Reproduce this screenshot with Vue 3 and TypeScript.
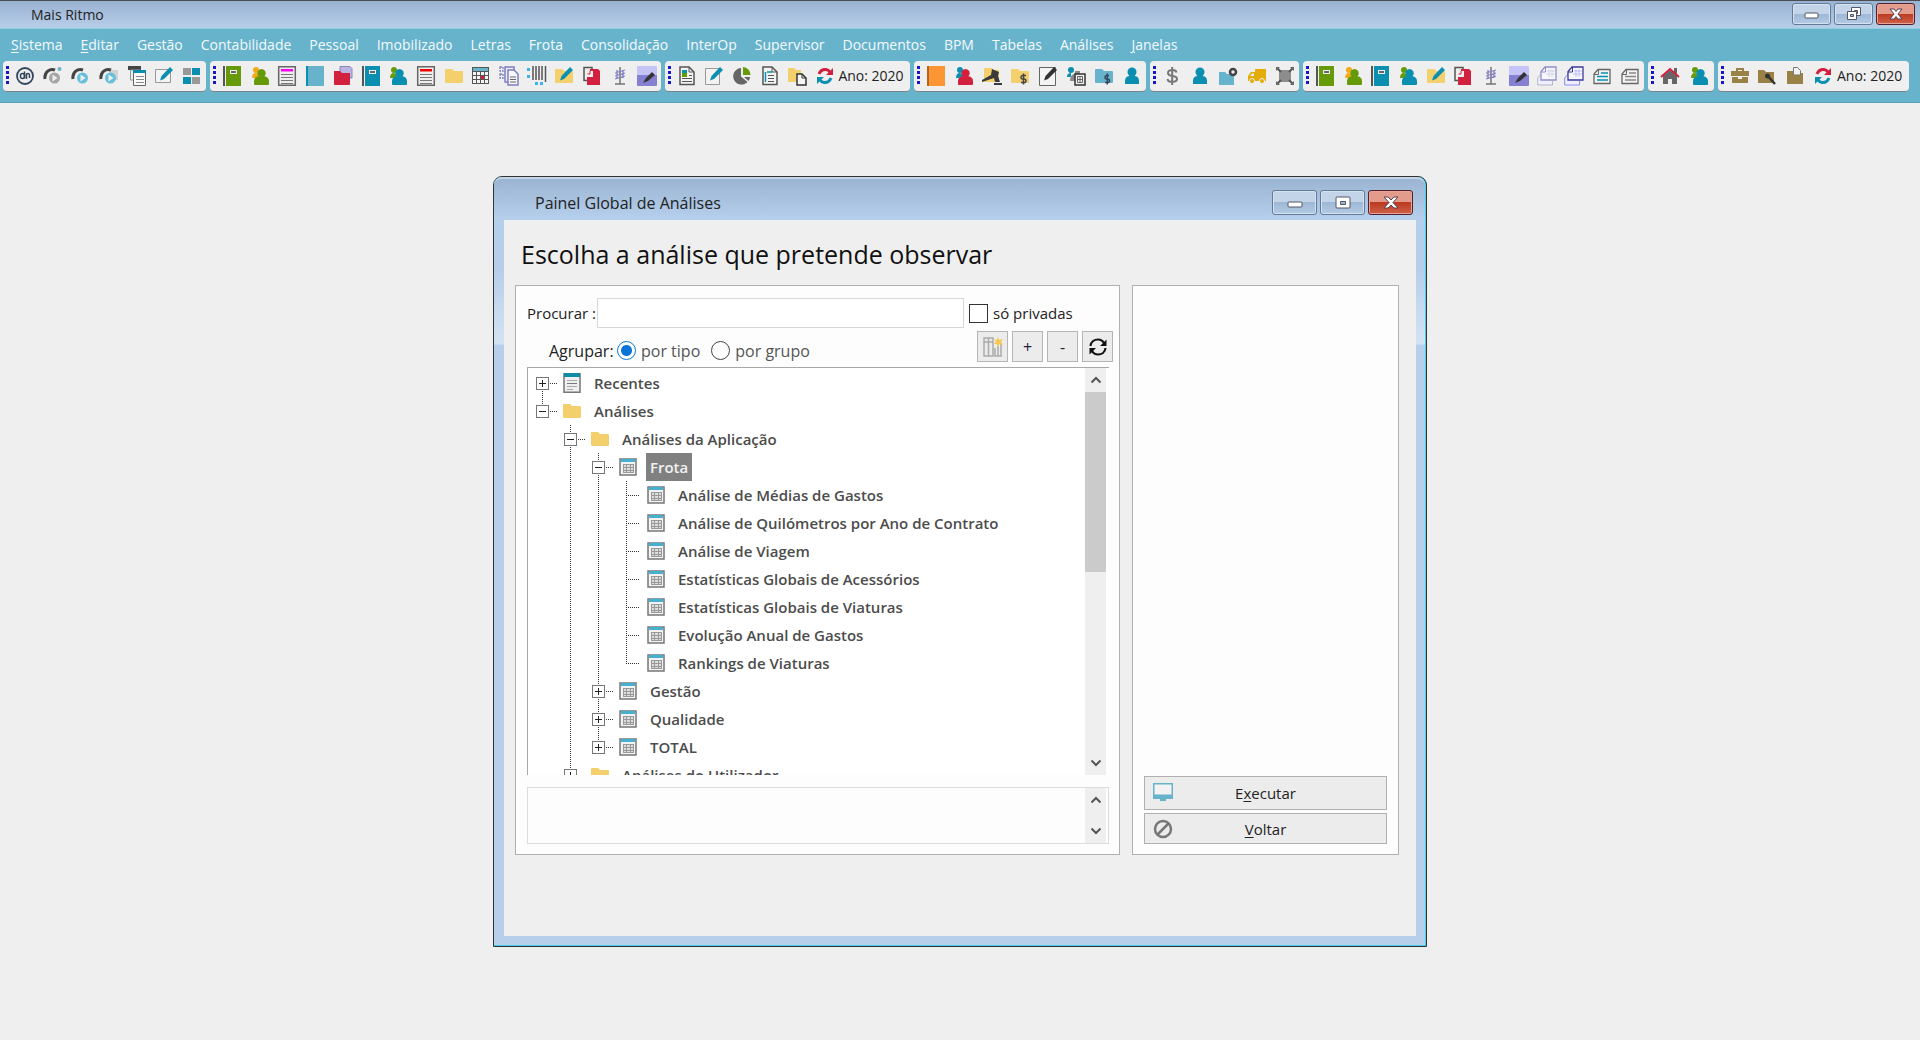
<script setup lang="ts">
import { ref } from 'vue'

interface ToolGroup { icons: string[]; year?: boolean }
interface TreeRow {
  label: string
  icon: 'report' | 'folder' | 'table'
  guides: string[]
  box?: '+' | '-'
  selected?: boolean
}

const teal = '#0a8fb0'
const sky = '#67b3cc'
const green = '#669a08'
const red = '#d2213f'
const sand = '#f3d06c'
const tan = '#9a8246'
const grey = '#666'
const violet = '#7f7fc4'

const book = (fill: string, spine = '#555') =>
  `<path fill="${spine}" d="M1 0h2v20H1z"/><path fill="${fill}" d="M4 0h15v20H4z"/><path fill="#eee" d="M8 4h7v4H8z"/><path fill="#666" d="M9 5h5v2H9z"/>`
const plainBook = (fill: string, spine: string) =>
  `<path fill="${fill}" d="M1 0h18v20H1z"/><path fill="${spine}" d="M1 0h2v20H1z"/>`
const body = (fill: string) =>
  `<path fill="${fill}" d="M11.500 3a4.200 4.200 0 0 1 3 7.200q4.500.8 4.500 5v3q0 .8-1 .8H5q-1 0-1-.8v-3q0-4.200 4.500-5A4.200 4.200 0 0 1 11.500 3z"/>`
const people = (back: string, front: string) =>
  `<circle cx="6" cy="4" r="3" fill="${back}"/><path fill="${back}" d="M2 12q0-5 4-5l4 2-3 3z"/>${body(front)}`
const folder = (fill: string) => `<path fill="${fill}" d="M2 3h6l2 2h8q1 0 1 1v10q0 1-1 1H2q-1 0-1-1V4q0-1 1-1z"/>`
const sheet = (head: string) =>
  `<path fill="#eee" stroke="#666" stroke-width="1.500" d="M1.700.7h16.600v18.600H1.700z"/><path fill="${head}" d="M4 3h12v2.500H4z"/><path stroke="#777" d="M4 8.500h12M4 11.500h12M4 14.500h12M4 17.500h12"/>`
const pencil = (fill: string) => `<path fill="${fill}" d="M16 1l3 3-9 9-4 1.500L7.500 10z"/>`
const page = (inner: string) =>
  `<path fill="#f4f4f4" stroke="#555" stroke-width="1.500" d="M3 1h9l5 5v12.500H3z"/><path fill="none" stroke="#555" d="M12 1v5h5"/>${inner}`
const phone = (ball: string, extra: string) =>
  `${extra}<path fill="none" stroke="#444" stroke-width="3" d="M2 13C1 6 7 2 12 4"/><circle cx="11.500" cy="12" r="5.500" fill="${ball}"/><path fill="#eee" d="M9.500 8.500l5 3.500-5 3.500z"/>`
const copies = (front: string, back: string) =>
  `<path fill="#eef" stroke="${back}" d="M4.500 7.500L.7 12v7h14.800v-4"/><path fill="#f6f6ff" stroke="${front}" stroke-width="1.300" d="M8 1h11v13H4V5.500z"/><path fill="none" stroke="${front}" d="M8.500 1v5H4"/><path stroke="${back}" stroke-width=".5" d="M12 3v8M15 3v8M9 8h9M10 5h8"/>`
const memo = (line: string) =>
  `<path fill="#f3f3f3" stroke="#666" stroke-width="1.300" d="M6 3.500h12v14H2V8z"/><path fill="none" stroke="#666" d="M6.500 3.500v5H2"/><path stroke="${line}" stroke-width="1.500" d="M9 7h7M5 10.500h11M5 14h11"/>`
const redFile = `<path fill="#eee" stroke="#555" stroke-width="1.500" d="M2 1.500h8v13H2z"/><path fill="${red}" d="M8 3h8l2 2v14H5V9h3z"/><path fill="#eee" d="M7 5h4v6H5V7z"/><path fill="none" stroke="${red}" d="M8 5v3H5.500"/>`
const antenna = `<path stroke="#777" stroke-width="1.500" d="M10 1v17M5 18h10"/><path fill="none" stroke="${violet}" stroke-width="1.300" d="M5 7l10-3M5 10l10-3M5 13l10-3M7 4v8M13 5v7"/>`
const noteBox = `<path fill="#c6c3f6" d="M1 0h18q1 0 1 1v8H0V1q0-1 1-1z"/><path fill="#8580d2" d="M0 9h20v10q0 1-1 1H1q-1 0-1-1z"/><path fill="#333" d="M15 6l3 3-7 6-5 2 3-5z"/>`
const refresh = `<path fill="none" stroke="${red}" stroke-width="3" d="M4 8q2-5 7-4.500 2.500.3 4 2.500"/><path fill="${red}" d="M18 2v7h-7z"/><path fill="none" stroke="${teal}" stroke-width="3" d="M16 12q-2 5-7 4.500-2.500-.3-4-2.500"/><path fill="${teal}" d="M2 18v-7h7z"/>`

const glyphs: Record<string, string> = {
  brand: `<circle cx="10" cy="10" r="8" fill="none" stroke="#34465c" stroke-width="1.800"/><rect x="5.500" y="7.500" width="4" height="5" rx="2" fill="none" stroke="#34465c" stroke-width="1.500"/><path fill="none" stroke="#34465c" stroke-width="1.500" d="M9.500 5.500v7M11.500 13V8q3-1.500 3 1.500V12"/>`,
  phoneGrey: phone('#a5a5a5', `<circle cx="16.500" cy="3" r="2" fill="${sky}"/>`),
  phoneBlue: phone('#68bfdc', ''),
  phoneCard: phone('#68bfdc', '<path fill="#d2d2d2" d="M10 4h9v10h-9z"/>'),
  windows: `<path fill="#444" d="M1 0h13v4H1z"/><path fill="#eee" stroke="#999" d="M3.500 4h10v10h-10z"/><path fill="#fafafa" stroke="#666" d="M6.500 4.500h12v15h-12z"/><path fill="${teal}" d="M6 4h13v3H6z"/><path stroke="#888" d="M9 10.500h8M9 13.500h8M9 16.500h8"/>`,
  edit: `<path fill="#f3f3f3" stroke="#999" d="M1.500 3.500h15v13h-15z"/>${pencil(teal)}`,
  tiles: `<path fill="#999" d="M1 2h8v7H1zM10 11h8v7h-8z"/><path fill="${teal}" d="M10 2h8v7h-8zM1 11h8v7H1z"/>`,
  bookGreen: book(green),
  bookTeal: book(teal),
  bookSky: plainBook(sky, teal),
  bookOrange: plainBook('#fb9632', '#b5651d'),
  peopleGreen: people('#f3a91c', green),
  peopleTeal: people(green, teal),
  peopleRed: people(teal, red),
  person: `<circle cx="10" cy="6" r="4.500" fill="${teal}"/><path fill="${teal}" d="M3 18v-3q0-5 5-5h4q5 0 5 5v3z"/>`,
  sheetPink: sheet('#ff00f0'),
  sheetRed: sheet('#f00000'),
  redFolder: `<path fill="#b9b4e2" stroke="#8d88b8" d="M7 .5h10l2 2V12H7z"/><path fill="${red}" d="M1 5h6l2 2h8v11q0 1-1 1H2q-1 0-1-1z"/>`,
  folder: folder(sand),
  calendar: `<path fill="#555" d="M1 1h17v17H1z"/><path fill="${sky}" d="M2 2h15v3H2z"/><path fill="#f4f4f4" d="M2 6h3v3H2zM6 6h3v3H6zM10 6h3v3h-3zM14 6h3v3h-3zM2 10h3v3H2zM6 10h3v3H6zM14 10h3v3h-3zM2 14h3v3H2zM6 14h3v3H6zM10 14h3v3h-3zM14 14h3v3h-3z"/><path fill="${red}" d="M10 10h3v3h-3z"/>`,
  pagesViolet: `<path fill="none" stroke="${violet}" stroke-width="1.300" stroke-dasharray="2 1" d="M1 1h3v4H1zM1 8h3v4H1z"/><path fill="#eee" stroke="${violet}" stroke-width="1.500" d="M6 1h9v15H6z"/><path fill="#f6f6ff" stroke="${violet}" stroke-width="1.500" d="M9 4h6l4 4v11H9z"/><path stroke="${grey}" d="M11 11h6M11 13.500h6M11 16h6"/>`,
  barcode: `<path stroke="#555" stroke-width="1.500" d="M6 0v14M9 0v14M12 0v14M15 0v14M18.500 0v16"/><path fill="#3fb2ee" d="M0 2h3v3H0zM0 9h3v3H0zM8 16h3v3H8zM13 16h3v3h-3z"/>`,
  folderEdit: `${folder(sand)}${pencil(teal)}`,
  redFile,
  antenna,
  noteBox,
  pageImage: page(`<path fill="${green}" d="M5 5h5v6H5z"/><path fill="${teal}" d="M5 4h5v3H5z"/><path stroke="#555" d="M12 9.500h3M5 12.500h10M5 15.500h10"/>`),
  editTall: `<path fill="#f3f3f3" stroke="#999" d="M1.500 2.500h14v16h-14z"/>${pencil(teal)}`,
  pie: `<path fill="${grey}" d="M9 2v8.500l6.500 5.500A8.300 8.300 0 1 1 9 2z"/><path fill="${green}" d="M11 1a8 8 0 0 1 7.500 8H11z"/><path fill="${grey}" d="M12 11h6q0 2-1.500 4z"/>`,
  pageText: page(`<path stroke="${teal}" stroke-width="1.500" d="M5.500 6v10M7 6h5"/><path stroke="#555" d="M8 9.500h6M8 12.500h6M8 15.500h6"/>`),
  folderDoc: `<path fill="${sand}" d="M1 2h6l2 2h5v12H1z"/><path fill="#f6f6f6" stroke="#333" stroke-width="1.500" d="M10 8h5l4 4v7h-9z"/><path fill="none" stroke="#333" d="M15 8v4h4"/>`,
  refresh,
  gavel: `<path fill="${sand}" d="M2 3q0-1 1-1h7l1 2h6v12H2z"/><path fill="#3a3a3a" d="M10 3l7 3-1 4 2 6h-5l-1-4-3 1-9 3v-2l9-5zM12 17h8v2h-8z"/>`,
  folderMoney: `${folder(sand)}<path fill="none" stroke="#444" stroke-width="1.500" d="M16 9.500h-3.500q-1.500 0-1.500 1.800t1.500 1.700h2q1.500 0 1.500 1.800t-1.500 1.700H11M13.500 7.500v11"/>`,
  note: `<path fill="#f4f4f4" stroke="#666" d="M1.500 1.500h16v18h-16z"/>${pencil('#333')}`,
  peopleCalc: `<circle cx="5" cy="4" r="3" fill="${teal}"/><path fill="${teal}" d="M1 11q0-4 4-4v4z"/><path fill="#888" d="M4 16q0-8 5-8V5h5v10H4z"/><path fill="#f0f0f0" stroke="#333" stroke-width="1.500" d="M9 8h10v11H9z"/><path fill="none" stroke="${grey}" d="M11.500 10.500h5v6h-5zM11 13.500h6M14 10v7"/>`,
  folderSky: `${folder(sky)}<path fill="none" stroke="#34465c" stroke-width="1.500" d="M15 9.500h-2.500q-1.500 0-1.500 1.800t1.500 1.700h1.500q1.500 0 1.500 1.800t-1.500 1.700H11M13.300 7.500v11"/>`,
  dollar: `<path fill="none" stroke="#777" stroke-width="2" d="M14.500 6.500Q14 4 10.500 4 6 4 6 6.800T10.500 10t4.500 3-4.500 3Q6 16 5.500 13M10.200 1v18"/>`,
  folderPin: `<path fill="${sky}" d="M1 6h6l2 2h7v11H1z"/><circle cx="15" cy="6" r="3" fill="#eee" stroke="#444" stroke-width="2.500"/>`,
  truck: `<path fill="#e3ac08" d="M8 3h11v12H1v-5l3-4h4z"/><path fill="#eee" d="M3 10l2-2.500h2V10z"/><circle cx="5" cy="15" r="2.500" fill="#e3ac08" stroke="#eee"/><circle cx="15" cy="15" r="2.500" fill="#e3ac08" stroke="#eee"/>`,
  expand: `<path fill="#8d8d8d" d="M4 4h12v12H4z"/><path stroke="#555" stroke-width="2" d="M2 2l4 4M18 2l-4 4M2 18l4-4M18 18l-4-4"/><path fill="#666" d="M1 1h4L1 5zM19 1v4l-4-4zM1 19v-4l4 4zM19 19h-4l4-4z"/>`,
  copiesLight: copies('#8f8fc8', '#b5b5cc'),
  copiesDark: copies('#3b3b9b', '#8c8cf0'),
  memoTeal: memo(teal),
  memoGrey: memo('#888'),
  home: `<path fill="#666" d="M3 10l7-6 7 6v8h-5v-5H8v5H3z"/><path fill="#666" d="M14 2h3v6h-3z"/><path fill="none" stroke="${red}" stroke-width="2" d="M1 11l9-8 9 8"/>`,
  briefcase: `<path fill="none" stroke="${tan}" stroke-width="2" d="M7 6V3h6v3"/><path fill="${tan}" d="M1 5h18v5H1zM2 11h6v2h4v-2h6v6H2z"/>`,
  folderTool: `<path fill="${tan}" d="M1 4h6l2 2h8v11H1z"/><path stroke="#333" stroke-width="2.500" d="M10 9l8 9"/><circle cx="10.500" cy="10" r="2.500" fill="#333"/>`,
  folderSheet: `<path fill="${tan}" d="M2 5h6l2 2h8v11H2z"/><path fill="#f2f2f2" stroke="#777" d="M8.500 1.500h4l3 3V9h-7z"/>`,
}

const treeGlyphs: Record<TreeRow['icon'], string> = {
  report: '<path fill="#efefef" stroke="#777" stroke-width="1.500" d="M2 .8h16v18.500H2z"/><path fill="#0e8ba5" d="M2 0h16v4H2z"/><path stroke="#aaa" d="M5 7.500h10M5 13.500h10M5 16.500h6"/><path stroke="#777" d="M5 10.500h10"/>',
  folder: folder(sand),
  table: '<path fill="#f3f3f3" stroke="#777" stroke-width="1.500" d="M2 2h16v16H2z"/><path fill="#48b0cf" d="M3 2h14v3H3z"/><path fill="#999" d="M5 7h11v9H5z"/><path fill="#ddd" d="M6 8h2v2H6zM9 8h3v2H9zM13 8h2v2h-2zM6 11h2v2H6zM9 11h3v2H9zM13 11h2v2h-2zM6 14h2v1H6zM9 14h3v1H9zM13 14h2v1h-2z"/>',
}

const menus: { text: string; key?: boolean }[] = [
  { text: 'Sistema', key: true }, { text: 'Editar', key: true }, { text: 'Gestão' }, { text: 'Contabilidade' },
  { text: 'Pessoal' }, { text: 'Imobilizado' }, { text: 'Letras' }, { text: 'Frota' }, { text: 'Consolidação' },
  { text: 'InterOp' }, { text: 'Supervisor' }, { text: 'Documentos' }, { text: 'BPM' }, { text: 'Tabelas' },
  { text: 'Análises' }, { text: 'Janelas', key: true },
]

const groups: ToolGroup[] = [
  { icons: ['brand', 'phoneGrey', 'phoneBlue', 'phoneCard', 'windows', 'edit', 'tiles'] },
  { icons: ['bookGreen', 'peopleGreen', 'sheetPink', 'bookSky', 'redFolder', 'bookTeal', 'peopleTeal', 'sheetRed', 'folder', 'calendar', 'pagesViolet', 'barcode', 'folderEdit', 'redFile', 'antenna', 'noteBox'] },
  { icons: ['pageImage', 'editTall', 'pie', 'pageText', 'folderDoc', 'refresh'], year: true },
  { icons: ['bookOrange', 'peopleRed', 'gavel', 'folderMoney', 'note', 'peopleCalc', 'folderSky', 'person'] },
  { icons: ['dollar', 'person', 'folderPin', 'truck', 'expand'] },
  { icons: ['bookGreen', 'peopleGreen', 'bookTeal', 'peopleTeal', 'folderEdit', 'redFile', 'antenna', 'noteBox', 'copiesLight', 'copiesDark', 'memoTeal', 'memoGrey'] },
  { icons: ['home', 'peopleTeal'] },
  { icons: ['briefcase', 'folderTool', 'folderSheet', 'refresh'], year: true },
]

const leaf = (label: string, last = false): TreeRow => ({
  label, icon: 'table', guides: ['', 'full', 'full', last ? 'up leaf' : 'full leaf'],
})

const rows: TreeRow[] = [
  { label: 'Recentes', icon: 'report', guides: ['down'], box: '+' },
  { label: 'Análises', icon: 'folder', guides: ['up'], box: '-' },
  { label: 'Análises da Aplicação', icon: 'folder', guides: ['', 'full'], box: '-' },
  { label: 'Frota', icon: 'table', guides: ['', 'full', 'full'], box: '-', selected: true },
  leaf('Análise de Médias de Gastos'),
  leaf('Análise de Quilómetros por Ano de Contrato'),
  leaf('Análise de Viagem'),
  leaf('Estatísticas Globais de Acessórios'),
  leaf('Estatísticas Globais de Viaturas'),
  leaf('Evolução Anual de Gastos'),
  leaf('Rankings de Viaturas', true),
  { label: 'Gestão', icon: 'table', guides: ['', 'full', 'full'], box: '+' },
  { label: 'Qualidade', icon: 'table', guides: ['', 'full', 'full'], box: '+' },
  { label: 'TOTAL', icon: 'table', guides: ['', 'full', 'up'], box: '+' },
  { label: 'Análises do Utilizador', icon: 'folder', guides: ['', 'full'], box: '+' },
]

const search = ref('')
const onlyPrivate = ref(false)
const grouping = ref<'tipo' | 'grupo'>('tipo')
const notes = ref('')
</script>

<template>
  <div class="app">
    <header class="shell">
      <div class="titlebar">
        <span>Mais Ritmo</span>
        <div class="controls">
          <button type="button" aria-label="Minimizar"><svg viewBox="0 0 16 16"><rect x="1" y="7" width="13" height="5" rx="1" fill="#fff" stroke="#556" /></svg></button>
          <button type="button" aria-label="Restaurar"><svg viewBox="0 0 16 16"><path fill="#fff" stroke="#556" d="M5.500 1.500h9v8h-9z" /><path fill="#9db8d6" stroke="#556" d="M8.500 4.500h3v3h-3z" /><path fill="#fff" stroke="#556" d="M1.500 5.500h9v8h-9z" /><path fill="#9db8d6" stroke="#556" d="M4.500 8.500h3v2h-3z" /></svg></button>
          <button type="button" class="close" aria-label="Fechar"><svg viewBox="0 0 16 16"><path fill="#fff" stroke="#545" d="M2 3h4l2 2.500L10 3h4l-4 5 4 5h-4l-2-2.500L6 13H2l4-5z" /></svg></button>
        </div>
      </div>
      <nav class="menu">
        <a v-for="m in menus" :key="m.text" href="#"><template v-if="m.key"><u>{{ m.text[0] }}</u>{{ m.text.slice(1) }}</template><template v-else>{{ m.text }}</template></a>
      </nav>
      <div class="toolbar">
        <div v-for="(g, i) in groups" :key="i" class="tools">
          <i class="grip"></i>
          <button v-for="(name, j) in g.icons" :key="j" type="button" :aria-label="name">
            <svg viewBox="0 0 20 20" v-html="glyphs[name]"></svg>
          </button>
          <span v-if="g.year" class="year">Ano: 2020</span>
        </div>
      </div>
    </header>

    <main class="desk">
      <section class="dialog">
        <div class="frame">
          <div class="caption">
            <span>Painel Global de Análises</span>
            <div class="controls">
              <button type="button" aria-label="Minimizar"><svg viewBox="0 0 16 16"><rect x="1" y="7" width="14" height="5" rx="1" fill="#fff" stroke="#556" /></svg></button>
              <button type="button" aria-label="Maximizar"><svg viewBox="0 0 16 16"><rect x="1" y="2" width="14" height="11" rx="1" fill="#fff" stroke="#556" /><path fill="#9db8d6" stroke="#556" d="M5.500 6.500h5v3h-5z" /></svg></button>
              <button type="button" class="close" aria-label="Fechar"><svg viewBox="0 0 16 16"><path fill="#fff" stroke="#545" d="M1 2h4l3 3 3-3h4l-5 5.500 5 5.500h-4l-3-3-3 3H1l5-5.500z" /></svg></button>
            </div>
          </div>
          <div class="content">
            <h1>Escolha a análise que pretende observar</h1>
            <div class="panels">
              <div class="panel left">
                <div class="find">
                  <label for="find">Procurar :</label>
                  <input id="find" v-model="search" type="text" />
                  <input id="private" v-model="onlyPrivate" type="checkbox" />
                  <label for="private">só privadas</label>
                </div>
                <div class="group">
                  <span class="group-title">Agrupar:</span>
                  <input id="tipo" v-model="grouping" type="radio" value="tipo" /><label for="tipo">por tipo</label>
                  <input id="grupo" v-model="grouping" type="radio" value="grupo" /><label for="grupo">por grupo</label>
                  <div class="actions">
                    <button type="button" aria-label="Nova análise"><svg viewBox="0 0 20 20"><path fill="none" stroke="#aaa" stroke-width="1.500" d="M1 1h9v18H1zM5.500 1v18M1 5h9M12 11v8h6V7M15 9v10" /><path fill="#f6c84f" d="M15 0l1.500 3L20 2l-2 3 2 3-3.500-1L15 10l-1.500-3L11 7l2-2.500L11 2l3 1z" /></svg></button>
                    <button type="button">+</button>
                    <button type="button">-</button>
                    <button type="button" aria-label="Atualizar"><svg viewBox="0 0 20 20"><path fill="none" stroke="#111" stroke-width="2.200" d="M2.500 9C3 4.500 6.500 2.500 10 2.500q4 0 6 3.500M17.500 11c-.5 4.500-4 6.500-7.500 6.500q-4 0-6-3.500" /><path fill="#111" d="M18.500 2.500V9h-6.500zM1.500 17.500V11H8z" /></svg></button>
                  </div>
                </div>
                <div class="tree">
                  <ul>
                    <li v-for="row in rows" :key="row.label">
                      <span v-for="(g, k) in row.guides" :key="k" class="guide" :class="g">
                        <span v-if="row.box && k === row.guides.length - 1" class="box" :class="{ plus: row.box === '+' }"></span>
                      </span>
                      <svg class="node" viewBox="0 0 20 20" v-html="treeGlyphs[row.icon]"></svg>
                      <span class="label" :class="{ selected: row.selected }">{{ row.label }}</span>
                    </li>
                  </ul>
                  <div class="scroll">
                    <button type="button" aria-label="Subir"><svg viewBox="0 0 12 12"><path d="M1.500 8.500L6 4l4.500 4.500" /></svg></button>
                    <div class="track"><div class="thumb"></div></div>
                    <button type="button" aria-label="Descer"><svg viewBox="0 0 12 12"><path d="M1.500 3.500L6 8l4.500-4.500" /></svg></button>
                  </div>
                </div>
                <div class="notes">
                  <textarea v-model="notes" aria-label="Descrição"></textarea>
                  <div class="scroll">
                    <button type="button" aria-label="Subir"><svg viewBox="0 0 12 12"><path d="M1.500 8.500L6 4l4.500 4.500" /></svg></button>
                    <div class="track"></div>
                    <button type="button" aria-label="Descer"><svg viewBox="0 0 12 12"><path d="M1.500 3.500L6 8l4.500-4.500" /></svg></button>
                  </div>
                </div>
              </div>
              <div class="panel right">
                <button type="button" class="run">
                  <svg viewBox="0 0 22 20"><path fill="#67b3cc" d="M1 0h20v16H1z" /><path fill="#f2f2f2" d="M2.500 1.500h17v10h-17z" /><path fill="#67b3cc" d="M8 16h6v2H8z" /></svg>
                  <span>E<u>x</u>ecutar</span>
                </button>
                <button type="button" class="back">
                  <svg viewBox="0 0 22 20"><circle cx="11" cy="10" r="8" fill="none" stroke="#777" stroke-width="2.500" /><path stroke="#777" stroke-width="2.500" d="M5.500 15.500l11-11" /></svg>
                  <span><u>V</u>oltar</span>
                </button>
              </div>
            </div>
          </div>
        </div>
      </section>
    </main>
  </div>
</template>

<style>
body {
  background: #efefef;
}
</style>

<style scoped>
* {
  box-sizing: border-box;
}
.app {
  min-height: 100vh;
  background: #efefef;
  font-family: "Open Sans", "Noto Sans", sans-serif;
  font-size: 14px;
  line-height: 20px;
  color: #222;
}
button {
  padding: 0;
  border: 0;
  background: none;
  font: inherit;
  color: inherit;
}
svg {
  display: block;
}
u {
  text-underline-offset: 2px;
}
.shell {
  background: #67b3cc;
  border-top: 1px solid #4d4d4d;
  border-bottom: 1px solid #559fb8;
}
.titlebar {
  display: flex;
  justify-content: space-between;
  height: 28px;
  padding: 2px 5px 0 31px;
  background: linear-gradient(#98b2d3, #b8cee8);
  border-bottom: 1px solid #8fd0e0;
}
.titlebar span {
  line-height: 24px;
}
.controls {
  display: flex;
  gap: 3px;
}
.controls button {
  display: flex;
  align-items: center;
  justify-content: center;
  width: 39px;
  height: 22px;
  border: 1px solid #637a99;
  border-radius: 3px;
  box-shadow: inset 0 0 0 1px #d5e2f1;
  background: linear-gradient(#c3d4e8 50%, #9db8d6 50%, #b4cbe4);
}
.controls button.close {
  border-color: #55202a;
  box-shadow: inset 0 0 0 1px #e4a598;
  background: linear-gradient(#e39b8b 50%, #bc3a22 50%, #cf6148);
}
.controls svg {
  width: 16px;
  height: 16px;
}
.menu {
  display: flex;
  gap: 18px;
  padding: 6px 11px 0;
}
.menu a {
  color: #f4fafc;
  text-decoration: none;
}
.toolbar {
  display: grid;
  grid-template-columns: 203fr 450fr 245fr 231fr 149fr 340fr 66fr 191fr;
  gap: 4px;
  padding: 6px 11px 10px 3px;
}
.tools {
  display: flex;
  align-items: center;
  min-width: 0;
  height: 31px;
  border-bottom: 1px solid #77858a;
  border-radius: 4px;
  background: #efefef;
}
.tools button {
  display: flex;
  flex: 1;
  justify-content: center;
  min-width: 0;
}
.tools svg {
  flex: none;
  width: 20px;
  height: 20px;
}
.grip {
  flex: none;
  width: 3px;
  height: 20px;
  margin: 0 2px 0 3px;
  background: linear-gradient(#1818c8 3px, transparent 3px) 0 0 / 3px 5px;
}
.year {
  flex: none;
  width: 72px;
  white-space: nowrap;
}
.desk {
  padding: 73px 16px 40px;
}
.dialog {
  max-width: 934px;
  margin: 0 auto;
  border: 1px solid #333;
  border-radius: 9px 9px 0 0;
  background: #3fd0f0;
  font-size: 15px;
}
.frame {
  margin: 0 1px 1px 0;
  padding: 0 9px 9px 10px;
  border-top: 2px solid #c3d4e6;
  border-radius: 8px 8px 0 0;
  background: linear-gradient(#9ab4d2, #b5cfec 40px, #b7cee9 90px, #d4e3f3 165px, #b7cfeb 166px);
}
.caption {
  display: flex;
  justify-content: space-between;
  height: 41px;
  padding: 11px 3px 0 31px;
}
.caption span {
  font-size: 16px;
  line-height: 26px;
}
.caption .controls button {
  width: 45px;
  height: 25px;
}
.content {
  padding: 16px 17px 81px 11px;
  background: #efefef;
}
h1 {
  margin: 0 0 13px 6px;
  font-size: 25px;
  font-weight: 400;
  line-height: 36px;
  color: #111;
}
.panels {
  display: flex;
  gap: 12px;
}
.panel {
  border: 1px solid #b0b0b0;
  background: #fdfdfd;
}
.left {
  flex: 1;
  min-width: 0;
  padding: 12px 10px 10px 11px;
}
.find {
  display: flex;
  align-items: center;
  height: 30px;
  font-weight: 500;
}
.find label:first-child {
  flex: none;
  width: 70px;
}
.find input[type="text"] {
  flex: 1;
  min-width: 0;
  height: 30px;
  border: 1px solid #d8d8d8;
  background: #fff;
}
input[type="checkbox"] {
  appearance: none;
  width: 19px;
  height: 19px;
  margin: 0 5px;
  border: 1px solid #333;
  background: #fff;
}
.find label:last-child {
  width: 116px;
}
.group {
  display: flex;
  align-items: center;
  height: 39px;
  padding: 6px 0 0 22px;
  font-size: 16px;
}
.group-title {
  width: 68px;
}
.group label {
  margin: 0 11px 0 5px;
  color: #555;
}
input[type="radio"] {
  appearance: none;
  width: 19px;
  height: 19px;
  margin: 0;
  border: 1px solid #444;
  border-radius: 50%;
  background: #fff;
}
input[type="radio"]:checked {
  border-color: #0b79d4;
  background: radial-gradient(circle, #0b74d6 5px, #fff 6px);
}
.actions {
  display: flex;
  gap: 4px;
  margin: 0 -4px 8px auto;
}
.actions button {
  display: flex;
  align-items: center;
  justify-content: center;
  width: 31px;
  height: 31px;
  border: 1px solid #b5b5b5;
  background: #ececec;
  color: #223;
}
.actions svg {
  width: 20px;
  height: 20px;
}
.tree {
  display: flex;
  height: 408px;
  overflow: hidden;
  border: 1px solid #a8a8a8;
  border-width: 1px 0 0 1px;
  background: #fff;
}
ul {
  flex: 1;
  margin: 0;
  padding: 1px 0 0;
  list-style: none;
}
li {
  display: flex;
  align-items: center;
  height: 28px;
  font-weight: 600;
  color: #4c4c4c;
}
.guide {
  display: flex;
  flex: none;
  align-items: center;
  justify-content: center;
  width: 28px;
  height: 28px;
  background-repeat: no-repeat;
}
.full {
  background-image: repeating-linear-gradient(#333 0 1px, transparent 1px 2px);
  background-size: 1px 28px;
  background-position: 14px 0;
}
.up,
.down {
  background-image: repeating-linear-gradient(#333 0 1px, transparent 1px 2px);
  background-size: 1px 14px;
  background-position: 14px 0;
}
.down {
  background-position: 14px 14px;
}
.leaf::after {
  content: "";
  width: 14px;
  height: 1px;
  margin-left: 14px;
  background: repeating-linear-gradient(90deg, #333 0 1px, transparent 1px 2px);
}
.box {
  position: relative;
  width: 13px;
  height: 13px;
  border: 1px solid #777;
  background: linear-gradient(#222, #222) 50% 50% / 7px 1px no-repeat #fff;
}
.box.plus {
  background: linear-gradient(#222, #222) 50% 50% / 7px 1px no-repeat, linear-gradient(#222, #222) 50% 50% / 1px 7px no-repeat #fff;
}
.box::after {
  content: "";
  position: absolute;
  left: 13px;
  top: 5px;
  width: 8px;
  height: 1px;
  background: repeating-linear-gradient(90deg, #333 0 1px, transparent 1px 2px);
}
.node {
  flex: none;
  width: 20px;
  height: 20px;
  margin: 0 6px;
}
.label {
  margin-left: 2px;
  padding: 0 4px;
  line-height: 28px;
  white-space: nowrap;
}
.label.selected {
  background: #808080;
  color: #f2f2f2;
}
.scroll {
  display: flex;
  flex: none;
  flex-direction: column;
  width: 21px;
  margin-right: 3px;
  background: #efefef;
}
.scroll button {
  display: flex;
  flex: none;
  align-items: center;
  justify-content: center;
  height: 24px;
}
.scroll svg {
  width: 12px;
  height: 12px;
  fill: none;
  stroke: #555;
  stroke-width: 2;
}
.track {
  flex: 1;
}
.thumb {
  height: 50%;
  background: #cbcbcb;
}
.notes {
  display: flex;
  height: 57px;
  margin-top: 12px;
  border: 1px solid #dcdcdc;
}
.notes .scroll {
  margin-right: 2px;
}
textarea {
  flex: 1;
  min-width: 0;
  border: 0;
  background: #fdfdfd;
  font: inherit;
  resize: none;
}
.right {
  display: flex;
  flex-direction: column;
  justify-content: flex-end;
  gap: 3px;
  width: 267px;
  padding: 10px 11px;
}
.right button {
  display: grid;
  grid-template-columns: 22px 1fr 22px;
  align-items: center;
  height: 34px;
  padding: 0 7px;
  border: 1px solid #b0b0b0;
  background: #ececec;
  font-weight: 500;
}
.right .back {
  height: 31px;
}
.right svg {
  width: 22px;
  height: 20px;
}
</style>
